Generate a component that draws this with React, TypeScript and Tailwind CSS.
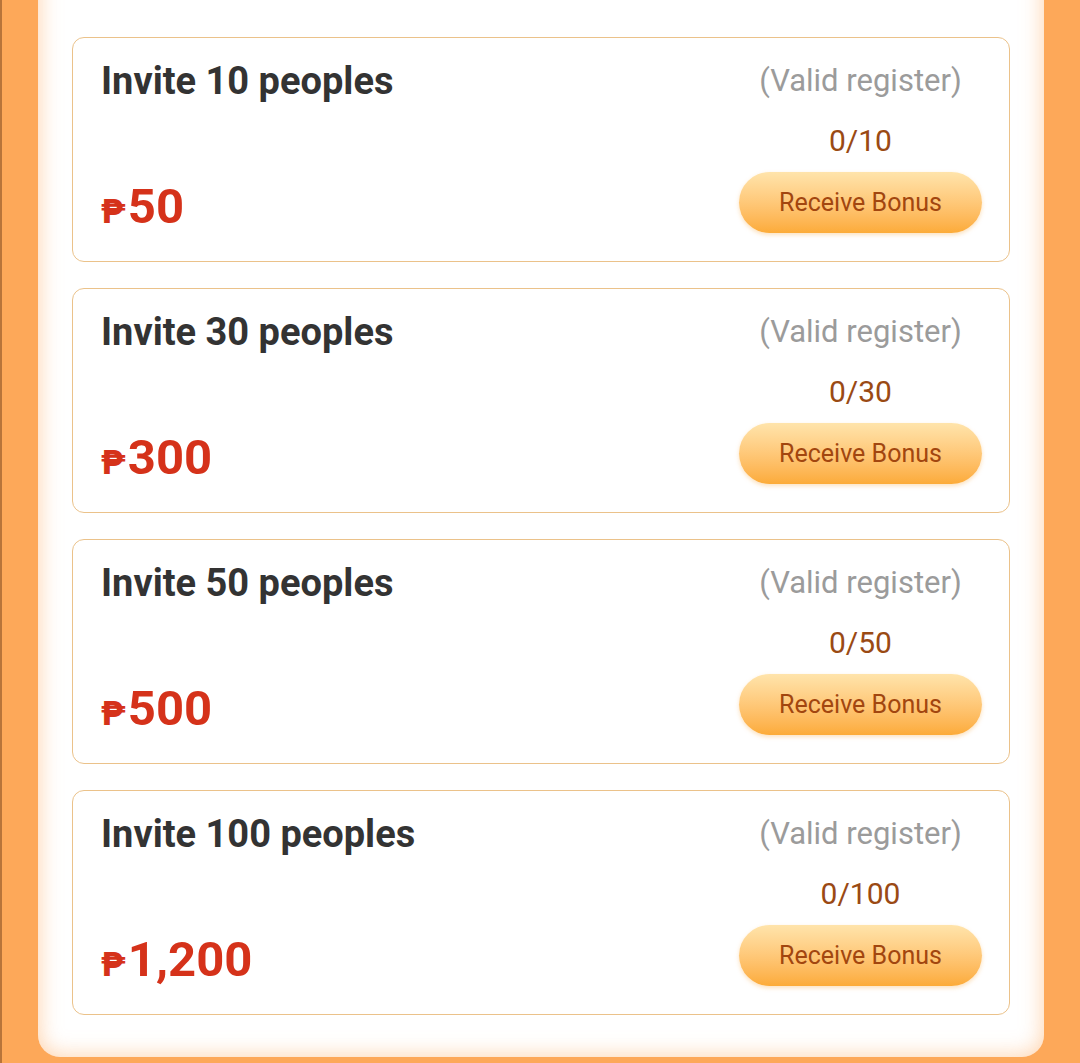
import React from 'react'

type Tier = {
  invite: number
  reward: string
}

const tiers: Tier[] = [
  { invite: 10, reward: '50' },
  { invite: 30, reward: '300' },
  { invite: 50, reward: '500' },
  { invite: 100, reward: '1,200' },
]

function TierCard({ t }: { t: Tier }) {
  return (
    <div className="h-[225px] flex justify-between rounded-[12px] border-[1.5px] border-[#ebc28a] bg-white pl-[28px] pr-[27px]">
      {/* izquierda: titulo + premio */}
      <div className="flex flex-col justify-between pt-[21px] pb-[24px]">
        <p className="text-[38px] leading-[44px] font-bold text-[#333333]">Invite {t.invite} peoples</p>
        <p className="flex items-baseline leading-[50px] font-bold text-[#d5321a]">
          <span className="text-[33px] font-black mr-[2px]">₱</span>
          <span className="text-[49px]">{t.reward}</span>
        </p>
      </div>

      {/* derecha: progreso + boton */}
      <div className="w-[243px] flex flex-col items-center pt-[23px]">
        <p className="text-[31px] leading-[40px] text-[#9b9b9b] whitespace-nowrap">(Valid register)</p>
        <p className="mt-[22px] text-[30px] leading-[36px] text-[#9a4a14]">0/{t.invite}</p>
        <button className="mt-[13px] w-[243px] h-[61px] rounded-full bg-gradient-to-b from-[#ffe4ab] to-[#fcab38] text-[25px] text-[#a2460f] shadow-[0_2px_4px_rgba(246,170,70,0.35)]">
          Receive Bonus
        </button>
      </div>
    </div>
  )
}

export default function App() {
  return (
    <div
      className="h-[1063px] overflow-hidden bg-[#fda859] border-l-2 border-[#b8743a]"
      style={{ fontFamily: 'Roboto, "Liberation Sans", sans-serif' }}
    >
      <div className="-mt-[40px] ml-[36px] w-[1006px] h-[1097px] rounded-b-[22px] bg-white shadow-[inset_0_0_22px_rgba(253,170,95,0.55)] pt-[77px] px-[34px]">
        <div className="flex flex-col gap-[26px]">
          {tiers.map((t) => (
            <TierCard key={t.invite} t={t} />
          ))}
        </div>
      </div>
    </div>
  )
}
